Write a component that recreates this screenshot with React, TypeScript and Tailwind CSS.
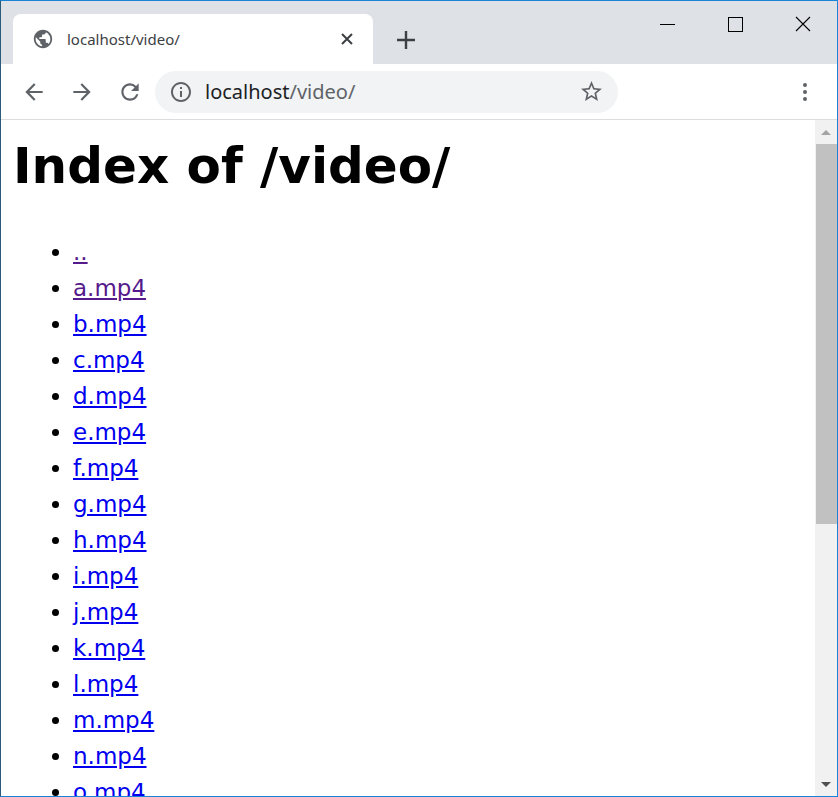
import React from "react";

const items = ["..", "a.mp4", "b.mp4", "c.mp4", "d.mp4", "e.mp4", "f.mp4", "g.mp4", "h.mp4", "i.mp4", "j.mp4", "k.mp4", "l.mp4", "m.mp4", "n.mp4", "o.mp4"];

export default function App() {
  return (
    <div className="w-[838px] h-[797px] overflow-hidden flex flex-col border border-[#1883d7] border-l-[#2b5b7a] bg-white" style={{ fontFamily: "'Noto Sans', 'DejaVu Sans', sans-serif" }}>
      {/* tab strip */}
      <div className="h-[63px] bg-[#dee1e6] flex items-end relative shrink-0">
        <div className="ml-[12px] w-[360px] h-[50px] bg-white rounded-t-[8px] flex items-center px-[19px]">
          <svg width="22" height="22" viewBox="0 0 24 24"><path fill="#5f6368" d="M12 2C6.48 2 2 6.48 2 12s4.48 10 10 10 10-4.48 10-10S17.52 2 12 2zm-1 17.93c-3.95-.49-7-3.850-7-7.93 0-.62.08-1.21.21-1.79L9 15v1c0 1.1.9 2 2 2v1.93zm6.9-2.54c-.26-.81-1-1.39-1.9-1.39h-1v-3c0-.55-.45-1-1-1H8v-2h2c.55 0 1-.45 1-1V7h2c1.1 0 2-.9 2-2v-.41c2.930 1.19 5 4.06 5 7.41 0 2.08-.8 3.97-2.1 5.39z"/></svg>
          <span className="ml-[13px] text-[15px] text-[#3c4043] flex-1">localhost/video/</span>
          <svg width="14" height="14" viewBox="0 0 14 14"><path d="M2 2l10 10M12 2L2 12" stroke="#3c4043" strokeWidth="2"/></svg>
        </div>
        <div className="ml-[22px] mb-[13px]">
          <svg width="22" height="22" viewBox="0 0 22 22"><path d="M11 2v18M2 11h18" stroke="#3c4043" strokeWidth="2.4"/></svg>
        </div>
        <div className="absolute right-0 top-0 flex">
          <div className="w-[68px] h-[46px] flex items-center justify-center"><div className="w-[15px] h-px bg-black" /></div>
          <div className="w-[68px] h-[46px] flex items-center justify-center"><div className="w-[15px] h-[15px] border border-black" /></div>
          <div className="w-[68px] h-[46px] flex items-center justify-center">
            <svg width="16" height="16" viewBox="0 0 16 16"><path d="M1 1l14 14M15 1L1 15" stroke="#000" strokeWidth="1.1"/></svg>
          </div>
        </div>
      </div>
      {/* toolbar */}
      <div className="h-[56px] flex items-center border-b border-[#dadce0] shrink-0">
        <div className="w-[20px]" />
        <svg width="26" height="26" viewBox="0 0 24 24"><path fill="#5f6368" d="M20 11H7.83l5.59-5.59L12 4l-8 8 8 8 1.41-1.41L7.83 13H20v-2z"/></svg>
        <div className="w-[22px]" />
        <svg width="26" height="26" viewBox="0 0 24 24"><path fill="#5f6368" d="M12 4l-1.41 1.41L16.170 11H4v2h12.17l-5.58 5.59L12 20l8-8z"/></svg>
        <div className="w-[22px]" />
        <svg width="26" height="26" viewBox="0 0 24 24"><path fill="#5f6368" d="M17.65 6.35A7.958 7.958 0 0012 4c-4.42 0-7.99 3.58-7.99 8s3.57 8 7.99 8c3.73 0 6.84-2.55 7.730-6h-2.08A5.99 5.99 0 0112 18c-3.31 0-6-2.69-6-6s2.69-6 6-6c1.66 0 3.14.69 4.22 1.78L13 11h7V4l-2.35 2.35z"/></svg>
        <div className="ml-[12px] w-[463px] h-[42px] rounded-full bg-[#f1f3f4] flex items-center px-[14px]">
          <svg width="24" height="24" viewBox="0 0 24 24"><path fill="#5f6368" d="M11 7h2v2h-2zm0 4h2v6h-2zm1-9C6.48 2 2 6.48 2 12s4.48 10 10 10 10-4.48 10-10S17.52 2 12 2zm0 18c-4.41 0-8-3.59-8-8s3.59-8 8-8 8 3.590 8 8-3.59 8-8 8z"/></svg>
          <span className="ml-[12px] text-[20px] flex-1"><span className="text-[#202124]">localhost</span><span className="text-[#5f6368]">/video/</span></span>
          <svg width="25" height="25" viewBox="0 0 24 24"><path fill="#5f6368" d="M22 9.24l-7.19-.62L12 2 9.19 8.63 2 9.24l5.46 4.73L5.82 21 12 17.27 18.18 21l-1.63-7.03L22 9.24zM12 15.4l-3.76 2.27 1-4.28-3.32-2.88 4.38-.38L12 6.1l1.71 4.04 4.38.38-3.32 2.88 1 4.28L12 15.4z"/></svg>
        </div>
        <div className="flex-1" />
        <div className="mr-[30px] flex flex-col gap-[3px]">
          <div className="w-[4px] h-[4px] rounded-full bg-[#5f6368]" />
          <div className="w-[4px] h-[4px] rounded-full bg-[#5f6368]" />
          <div className="w-[4px] h-[4px] rounded-full bg-[#5f6368]" />
        </div>
      </div>
      {/* content */}
      <div className="flex-1 flex overflow-hidden">
        <div className="flex-1 overflow-hidden px-[12px]" style={{ fontFamily: "'DejaVu Sans', Verdana, sans-serif" }}>
          <h1 className="text-[50px] font-bold leading-[56px] mt-[18px] mb-[40px] text-black">Index of /video/</h1>
          <ul className="list-disc pl-[60px] text-[23px] leading-[36px]">
            {items.map((it, i) => (
              <li key={it}>
                <a href="#" className={`underline ${i < 2 ? "text-[#551a8b]" : "text-[#0000ee]"}`}>{it}</a>
              </li>
            ))}
          </ul>
        </div>
        <div className="w-[22px] bg-[#f1f1f1] flex flex-col items-center">
          <div className="h-[24px] flex items-center justify-center">
            <div className="w-0 h-0 border-l-[5px] border-r-[5px] border-b-[5px] border-l-transparent border-r-transparent border-b-[#a3a3a3]" />
          </div>
          <div className="w-[21px] h-[380px] bg-[#c1c1c1]" />
          <div className="flex-1" />
          <div className="h-[24px] flex items-center justify-center">
            <div className="w-0 h-0 border-l-[5px] border-r-[5px] border-t-[5px] border-l-transparent border-r-transparent border-t-[#505050]" />
          </div>
        </div>
      </div>
    </div>
  );
}
